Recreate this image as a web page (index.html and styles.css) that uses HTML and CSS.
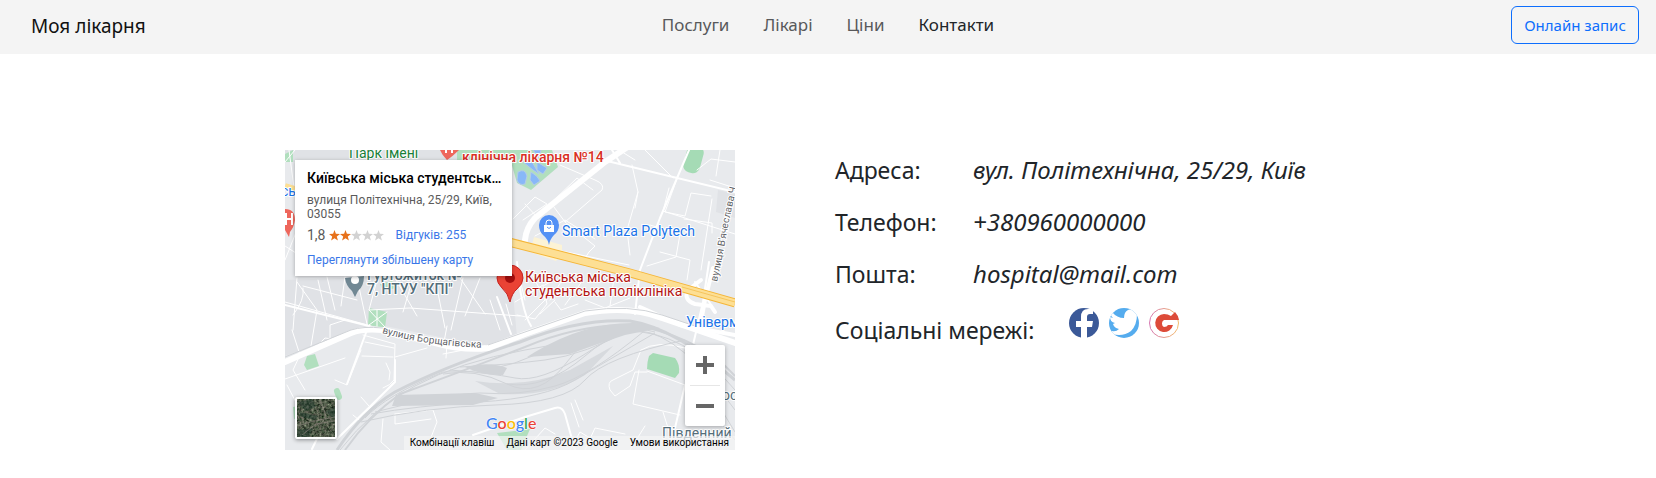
FILE: index.html
```html
<!DOCTYPE html>
<html lang="uk">
<head>
<meta charset="utf-8">
<meta name="viewport" content="width=device-width, initial-scale=1">
<title>Моя лікарня</title>
<link rel="stylesheet" href="styles.css">
</head>
<body>
<header class="header">
  <a class="brand" href="#">Моя лікарня</a>
  <nav class="nav">
    <a class="nav-link" href="#">Послуги</a>
    <a class="nav-link" href="#">Лікарі</a>
    <a class="nav-link" href="#">Ціни</a>
    <a class="nav-link nav-active" href="#">Контакти</a>
  </nav>
  <button class="book" type="button">Онлайн запис</button>
</header>
<main class="contacts">
  <section class="map">
    <svg class="map-canvas" viewBox="0 0 450 300" preserveAspectRatio="xMidYMid slice">
      <rect width="450" height="300" fill="#e8eaed"/>
      <!-- city blocks -->
      <g fill="#e0e2e6">
        <path d="M0 130L226 122L232 187L200 196L100 176L78 178L0 206Z"/>
        <path d="M433 40L450 44V68L431 62Z"/>
        <path d="M0 0H225V12H0Z"/>
      </g>
      <!-- parks -->
      <g fill="#b1dfbe">
        <path d="M172 0H267L273 17L246 40L232 33L226 12H172Z"/>
        <path d="M84 158L102 162L100 178L83 175Z"/>
        <path d="M22 206L30 204L34 216L22 220L19 215Z"/>
        <rect x="50" y="238" width="6" height="12" rx="3" transform="rotate(-20 53 244)"/>
        <path d="M8 257l10-2v12l-9 2zM212 283L245 279L236 300H222Z"/>
        <path d="M95 134l12-3 4 7-13 3zM0 4l8-4v12H0z"/>
      </g>
      <g fill="#a5dbb5">
        <rect x="400" y="-5" width="17" height="28" rx="7" transform="rotate(15 408 9)"/>
        <path d="M364 206Q362 212 362 219L390 228L394 223Q395 214 390 208L368 203Z"/>
      </g>
      <path d="M233 22Q240 18 242 26L240 34Q234 36 232 30ZM246 22Q253 26 255 31L249 35L245 30ZM238 12L246 10L254 24L248 20ZM252 12L262 18L258 24L252 20ZM248 0L256 0L254 8Z" fill="#88b8f8" stroke="#b4cbe8"/>
      <path d="M249 87L277 95V103L271 111L245 102Z" fill="#fcf3d5"/>
      <!-- minor streets -->
      <g class="street street-thin">
        <path d="M0 12L10 0M4 0L12 60M0 96L22 110M14 75L0 110M12 128L8 180M12 132L32 160L26 196M33 130L42 170M42 127L50 160M60 127L56 156M18 136L72 150M72 128L82 174M92 130L84 160L125 158L235 166M110 128L132 166M128 128L118 162M150 128L160 178M178 128L166 180M175 128L200 164M195 128L180 166M0 152L86 176M8 165Q20 150 18 138M28 200L40 188L54 190M45 188V175L60 170M84 160L100 177M102 162L84 175M92 160V176"/>
        <path d="M228 69L250 47L262 54L238 70M240 54L253 68M275 15L310 30Q320 34 317 40L280 72L266 53L292 28L308 40M280 72L310 96L304 102Q298 110 300 116M250 86L280 70L310 89M262 98L344 115M350 58L353 42L347 15M353 42L342 80L345 105M384 38L378 61L450 84M393 26L380 62L400 66L406 43L426 46M399 69L427 73V83M365 75L395 84L391 107L362 116M375 102L405 110L402 130M427 49L416 120M412 20L426 9L450 12M334 0L350 10M360 0L388 28M435 0L431 26M425 30L450 38"/>
        <path d="M232 118L240 150M245 120L260 150M258 135L230 152M280 125L265 150M298 130L280 155M300 150L320 158L345 148M329 128L325 156M260 150L240 170M255 164L270 150M205 150L215 180M221 154L227 175M232 165L250 169L262 154L258 136L269 130M270 152L276 160L293 154"/>
        <path d="M78 185L110 194L109 230Q106 235 98 238M80 192L109 198M77 206L108 207M110 207L142 198M101 213L105 222L104 230M76 200L62 235L50 230M7 180L15 205L8 220L20 240M0 229L60 208M2 235L14 258M76 247L84 256M68 265L74 270L110 231M98 269L96 292L105 300M110 264L148 260L152 272L145 290M158 204L200 196M161 208L162 193L205 200M162 176L159 192M110 264v10l36-5"/>
        <path d="M356 200L348 220L328 230Q322 232 325 240L330 246L345 236L350 222L362 222M354 220L348 254L395 265M356 200Q372 190 400 198M362 221L400 235M290 250L298 270M286 253L294 277M240 300L260 278L270 284M300 300L310 278L340 284M285 300L295 282L325 300M378 262L390 300M345 300L360 276"/>
      </g>
      <g class="street street-mid">
        <path d="M318 10L450 42M335 13L327 0M404 0L375 68L355 120L350 164M424 112L418 152L408 195M410 132L427 156M0 155L84 176M52 289L110 232L110 210M82 180L62 234M212 147L226 184M232 112Q236 160 246 176M390 278L400 235M188 285L240 267L270 258Q277 256 280 264L290 300M27 299L40 272"/>
      </g>
      <!-- railway yard -->
      <g fill="none" stroke="#d0d3d7" stroke-width="1">
        <path d="M52 300Q78 261 110 242Q160 216 235 192Q295 168 345 171Q390 178 450 230" stroke-width="3"/>
        <path d="M60 300Q84 266 115 244Q170 224 240 197Q305 170 360 177Q420 192 450 226" stroke-width="2"/>
        <path d="M55 300Q86 260 130 236T240 200T340 181Q400 180 450 240"/>
        <path d="M80 268Q100 246 158 222Q210 224 250 205T345 177"/>
        <path d="M90 262Q160 244 195 243Q235 246 270 236T358 182"/>
        <path d="M86 264Q130 256 195 252T290 230T370 183"/>
        <path d="M76 272Q140 257 210 255T300 230T400 190"/>
        <path d="M158 224Q190 218 222 234T282 212T350 180"/>
        <path d="M165 220Q205 223 230 228T300 204T360 180"/>
        <path d="M175 217Q220 215 260 210T350 177"/>
        <path d="M222 234Q260 240 300 206T370 182"/>
        <path d="M355 181Q395 184 450 260M400 200L450 282M400 230L450 290"/>
      </g>
      <g fill="#d0d3d7">
        <path d="M111 245L190 243L213 248L188 255L107 256Z"/>
        <path d="M180 217Q205 211 222 218L218 225Q198 226 180 217Z"/>
        <path d="M250 202Q300 172 350 173L375 178L340 185Q312 194 285 204L242 207Z"/>
        <path d="M190 231Q240 239 285 220L328 196L300 225Q265 247 215 244Z" opacity=".7"/>
      </g>
      <!-- avenues -->
      <g fill="none" stroke="#fff" stroke-linecap="round" stroke-linejoin="round">
        <path d="M240 90Q241 78 250 68L320 12L344 -4" stroke-width="6"/>
        <path d="M0 212L66 183Q78 178 98 180L150 193Q180 201 203 198L240 184L300 163Q345 155 377 168L450 193" stroke-width="6"/>
        <path d="M355 157L395 175L450 185" stroke-width="4"/>
        <path d="M428 118L420 150L415 178M416 130L403 140Q398 150 410 154L426 156L430 162" stroke-width="4"/>
      </g>
      <path d="M0 207L66 180Q78 176 98 178M203 195L240 182L300 161Q345 154 377 165L410 176" fill="none" stroke="#d0d3d7" stroke-width="1"/>
      <path d="M220 91L345 123L450 153" fill="none" stroke="#f5b638" stroke-width="9"/>
      <path d="M220 91L345 123L450 153" fill="none" stroke="#fddf94" stroke-width="7"/>
      <path d="M397 137L450 152" fill="none" stroke="#f5c45e" stroke-width="1"/>
      <path d="M0 36L10 39" stroke="#fddf94" stroke-width="6"/>
      <!-- place markers -->
      <g fill="#ee675c">
        <path d="M155 0Q157 5 162 10Q168 6 174 0Z"/>
        <path d="M0 59Q10 59 10 70Q9 77 5 82L4 87L0 80Z"/>
      </g>
      <path d="M1 63V75M7 63V75M1 69H7M161 0V3M167 0V3" stroke="#fff" stroke-width="2"/>
      <path d="M60 128Q61 136 67 141L70 147L73 141Q79 136 79 126Z" fill="#718894"/>
      <circle cx="70" cy="130" r="4" fill="#fff"/>
      <g>
        <path d="M264 95Q263 89 258 85Q254 81 254 75A10 10 0 0 1 274 75Q274 81 269 85Q265 89 264 95Z" fill="#5491f5"/>
        <path d="M259 75H269V82H259Z" fill="#fff"/>
        <path d="M261 75V73a3 3 0 0 1 6 0V75" fill="none" stroke="#fff" stroke-width="1"/>
        <path d="M262 77Q264 80 266 77" fill="none" stroke="#5491f5" stroke-width="1"/>
      </g>
      <path d="M225 152Q223 143 217 138Q212 133 212 128A13 13 0 0 1 238 128Q238 134 232 139Q227 143 225 152Z" fill="#ea4335" stroke="#c5221f" stroke-width="1"/>
      <circle cx="225" cy="128" r="5" fill="#a50e0e"/>
      <!-- place names -->
      <g class="place">
        <text x="64" y="8" fill="#188038">Парк імені</text>
        <text x="177" y="12" class="place-strong" fill="#d93025">клінічна лікарня №14</text>
        <text x="277" y="86" fill="#1a73e8">Smart Plaza Polytech</text>
        <text x="240" y="132" fill="#b31412">Київська міська</text>
        <text x="240" y="146" fill="#b31412">студентська поліклініка</text>
        <text x="401" y="177" fill="#1a73e8">Універмаг</text>
        <text x="-4" y="46" fill="#1a73e8">сь</text>
        <text x="82" y="130" class="place-strong" fill="#546e7a">Гуртожиток №</text>
        <text x="82" y="144" class="place-strong" fill="#546e7a">7, НТУУ "КПІ"</text>
        <text x="437" y="250" fill="#546e7a">ос</text>
        <text x="377" y="288" fill="#546e7a">Південний</text>
      </g>
      <g class="street-name">
        <path id="borsh" d="M97 183Q145 197 210 198" fill="none" stroke="none"/>
        <text><textPath href="#borsh">вулиця Борщагівська</textPath></text>
        <path id="lypy" d="M432 132Q438 105 442 82T460 4" fill="none" stroke="none"/>
        <text><textPath href="#lypy">вулиця В'ячеслава Ч</textPath></text>
      </g>
      <text class="google" x="201" y="279"><tspan fill="#4285f4">G</tspan><tspan fill="#ea4335">o</tspan><tspan fill="#fbbc04">o</tspan><tspan fill="#4285f4">g</tspan><tspan fill="#34a853">l</tspan><tspan fill="#ea4335">e</tspan></text>
    </svg>
    <article class="card">
      <h2 class="card-title">Київська міська студентська поліклініка</h2>
      <p class="card-address">вулиця Політехнічна, 25/29, Київ, 03055</p>
      <div class="rating">
        <span class="score">1,8</span>
        <svg class="stars" viewBox="0 0 55 11">
          <defs><path id="star" d="M5.5 0L6.9 3.8L11 4L7.8 6.5L8.9 10.5L5.5 8.2L2.1 10.5L3.2 6.5L0 4L4.1 3.8Z"/></defs>
          <g fill="#e7711b"><use href="#star"/><use href="#star" x="11"/></g>
          <g fill="#d2d2d2"><use href="#star" x="22"/><use href="#star" x="33"/><use href="#star" x="44"/></g>
        </svg>
        <a class="card-link" href="#">Відгуків: 255</a>
      </div>
      <a class="card-link" href="#">Переглянути збільшену карту</a>
    </article>
    <button class="satellite" type="button" aria-label="Супутник">
      <svg viewBox="0 0 38 38">
        <defs>
          <filter id="ground" x="0" y="0" width="100%" height="100%" color-interpolation-filters="sRGB">
            <feTurbulence type="fractalNoise" baseFrequency=".4" numOctaves="4" seed="4"/>
            <feColorMatrix values=".7 .2 0 0 -.14  .6 .3 0 0 -.1  .6 .2 0 0 -.12  0 0 0 0 1"/>
          </filter>
        </defs>
        <rect width="38" height="38" filter="url(#ground)"/>
        <g fill="#203a2e" opacity=".5"><path d="M1 3L15 0L19 8L8 12ZM2 13L21 17L18 21L5 18ZM28 13L38 8V20ZM0 31L16 29L12 38H0Z"/></g>
        <path d="M0 27L17 22L38 18M5 36L19 25L38 22M23 0L29 17" fill="none" stroke="#8f8580" stroke-width="1" opacity=".6"/>
      </svg>
    </button>
    <div class="zoom">
      <button class="zoom-button" type="button" aria-label="Збільшити"><svg viewBox="0 0 18 18"><path d="M7 0h4v7h7v4h-7v7H7v-7H0V7h7z"/></svg></button>
      <button class="zoom-button" type="button" aria-label="Зменшити"><svg viewBox="0 0 18 18"><path d="M0 7h18v4H0z"/></svg></button>
    </div>
    <footer class="credits">
      <button class="credit" type="button">Комбінації клавіш</button>
      <span class="credit">Дані карт ©2023 Google</span>
      <a class="credit" href="#">Умови використання</a>
    </footer>
  </section>
  <section class="details">
    <div class="row"><span class="label">Адреса:</span><em class="value">вул. Політехнічна, 25/29, Київ</em></div>
    <div class="row"><span class="label">Телефон:</span><em class="value">+380960000000</em></div>
    <div class="row"><span class="label">Пошта:</span><em class="value">hospital@mail.com</em></div>
    <div class="row row-social"><span class="label label-social">Соціальні мережі:</span>
      <div class="socials">
        <a class="social" href="#" aria-label="Facebook"><svg viewBox="0 0 30 30"><circle cx="15" cy="15" r="15" fill="#3b5998"/><path d="M12 30V19H7V13H12V9Q12 1 19 1H24V6H21Q18 6 18 9V13H24L23 19H18V30Z" fill="#fff"/></svg></a>
        <a class="social" href="#" aria-label="Twitter"><svg viewBox="0 0 30 30"><defs><clipPath id="disc"><circle cx="15" cy="15" r="15"/></clipPath></defs><g clip-path="url(#disc)"><rect width="30" height="30" fill="#55acee"/><path d="M3 23Q7 24 10 21Q5 20 4 16L6 15Q1 14 1 9L4 10Q0 6 3 4Q8 10 15 10Q15 4 19 2Q23 0 26 3L30 2L28 6Q28 17 22 23Q14 29 3 26Z" fill="#fff"/></g></svg></a>
        <a class="social" href="#" aria-label="Google"><svg viewBox="0 0 30 30"><defs><linearGradient id="ring"><stop stop-color="#d577b0"/><stop offset="1" stop-color="#f3bd6d"/></linearGradient></defs><circle cx="15" cy="15" r="14.5" fill="#fff" stroke="url(#ring)"/><path d="M26 4L22 8Q19 6 15 6A9 9 0 1 0 24 17H19Q18 19 15 19A4 4 0 0 1 15 12H30Q29 7 26 4Z" fill="#dd4b39"/></svg></a>
      </div>
    </div>
  </section>
</main>
</body>
</html>
```
FILE: styles.css
```css
* { box-sizing: border-box; }
body { margin: 0; background: #fff; color: #212529; font-family: "Noto Sans", "Open Sans", sans-serif; }
a { color: inherit; text-decoration: none; }
button { font: inherit; border: 0; padding: 0; cursor: pointer; }
svg { display: block; }

.header { display: grid; grid-template-columns: 1fr auto 1fr; align-items: center; min-height: 54px; padding: 0 17px 4px; background: #f4f4f4; }
.brand { padding: 2px 0 0 14px; font-size: 19px; color: #111; }
.nav { display: flex; gap: 34px; padding-bottom: 2px; }
.nav-link { font-size: 17px; color: #58595b; }
.nav-active { color: #212529; }
.book { justify-self: end; width: 128px; height: 38px; border: 1px solid #0d6efd; border-radius: 6px; background: transparent; color: #0d6efd; font-size: 15px; white-space: nowrap; }

.contacts { display: flex; justify-content: center; gap: 100px; padding: 96px 24px 24px; }
.map { position: relative; flex: 0 1 450px; height: 300px; overflow: hidden; font-family: Roboto, sans-serif; }
.map-canvas { width: 100%; height: 100%; }
.street { fill: none; stroke: #fff; stroke-linejoin: round; stroke-linecap: round; }
.street-thin { stroke-width: 1; }
.street-mid { stroke-width: 2; }
.place { font-size: 14px; paint-order: stroke; stroke: #fff; stroke-width: 2px; stroke-linejoin: round; }
.place-strong { font-weight: 500; }
.street-name { font-size: 10px; fill: #5f6368; paint-order: stroke; stroke: #fff; stroke-width: 2px; }
.google { font-family: Lato, sans-serif; font-size: 16px; font-weight: 500; paint-order: stroke; stroke: #fff; stroke-width: 1px; }

.card { position: absolute; top: 10px; left: 10px; width: 217px; padding: 10px 10px 9px 12px; background: #fff; box-shadow: 0 1px 4px rgba(0, 0, 0, .3); font-size: 12px; line-height: 14px; }
.card-title { margin: 0 0 6px; overflow: hidden; color: #000; font-size: 14px; font-weight: 500; line-height: 17px; text-overflow: ellipsis; white-space: nowrap; }
.card-address { margin: 0 0 6px; color: #5b5b5b; }
.rating { display: flex; align-items: center; margin-bottom: 10px; }
.score { color: #5b5b5b; font-size: 14px; line-height: 16px; }
.stars { width: 55px; height: 11px; margin: 0 12px 0 3px; }
.card-link { color: #3a77e8; }

.satellite { position: absolute; left: 10px; bottom: 11px; width: 42px; height: 42px; border: 2px solid #fff; border-radius: 2px; overflow: hidden; box-shadow: 0 1px 4px rgba(0, 0, 0, .4); }
.zoom { position: absolute; right: 10px; bottom: 24px; width: 40px; padding: 0 5px; border-radius: 2px; background: #fff; box-shadow: 0 1px 4px rgba(0, 0, 0, .3); }
.zoom-button { display: grid; place-items: center; width: 100%; height: 40px; background: transparent; fill: #666; }
.zoom-button svg { width: 18px; height: 18px; }
.zoom-button + .zoom-button { height: 41px; border-top: 1px solid #e6e6e6; }
.credits { position: absolute; right: 0; bottom: 0; display: flex; font-size: 10px; line-height: 14px; color: #000; }
.credit { padding: 0 6px; background: rgba(245, 245, 245, .7); white-space: nowrap; }

.details { flex: 0 1 536px; padding-top: 2px; font-size: 23px; line-height: 36px; }
.row { display: flex; align-items: baseline; margin-bottom: 16px; }
.label { flex: 0 0 138px; }
.value { font-size: 24px; }
.row-social { align-items: flex-end; }
.label-social { flex: 0 0 234px; }
.socials { display: flex; gap: 10px; padding-bottom: 10px; }
.social { width: 30px; height: 30px; }
```
